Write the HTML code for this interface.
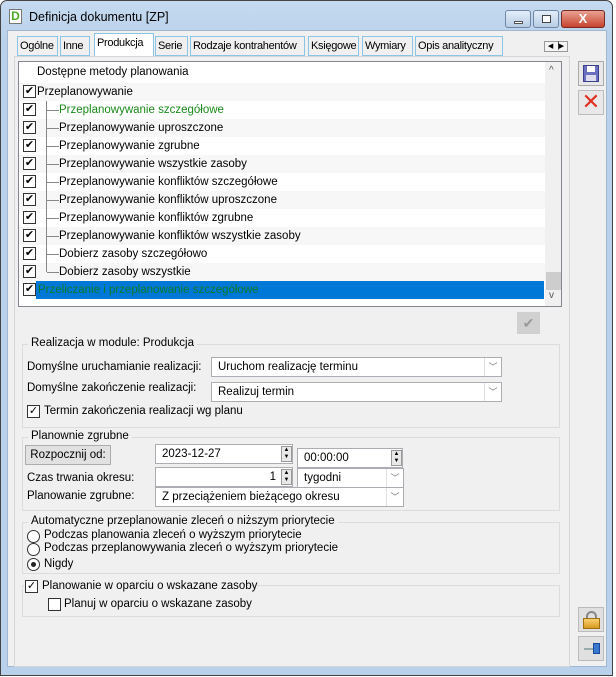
<!DOCTYPE html>
<html><head><meta charset="utf-8"><style>
*{box-sizing:border-box;margin:0;padding:0}
body{width:616px;height:677px;background:#fff;font-family:"Liberation Sans",sans-serif;font-size:11.5px;color:#000;position:relative;overflow:hidden}
.a{position:absolute}
.win{left:0;top:0;width:613px;height:676px;background:linear-gradient(#c5daf0,#b9d1ea 40px,#b9d1ea);border:1px solid #444;border-radius:7px 7px 0 0}
.client{left:7px;top:30px;width:600px;height:637px;background:#f0f0f0;border:1px solid #9fb7d0}
.tab{top:36px;height:20px;border:1px solid #8cc4e6;background:#f0f0f0;padding:3px 2px;white-space:nowrap;font-size:11px;letter-spacing:-0.3px;overflow:hidden}
.panel{left:14px;top:56px;width:556px;height:611px;border:1px solid #d6d6d6;background:#f0f0f0}
.list{left:18px;top:61px;width:544px;height:246px;border:1px solid #828790;background:#fff;overflow:hidden}
.row{position:absolute;left:0;width:526px;height:18px;line-height:18px}
.cb{position:absolute;width:13px;height:13px;border:1px solid #333;background:#fff;font-size:11px;line-height:11px;text-align:center}
.grp{border:1px solid #dcdcdc}
.lg{background:#f0f0f0;padding:0 3px;position:absolute;top:-8px;left:5px}
.combo{border:1px solid #abadb3;background:#fff;height:20px;line-height:18px;padding-left:6px}
.dd{position:absolute;right:0;top:0;width:17px;height:18px;border-left:1px solid #e0e0e0;color:#777;font-size:9px;text-align:center;line-height:18px}
.rb{position:absolute;width:13px;height:13px;border:1px solid #333;border-radius:50%;background:#fff}
.sp{position:absolute;width:11px;border:1px solid #999;background:#e8e8e8;font-size:6px;line-height:7px;text-align:center}
.sbtn{left:578px;width:26px;height:25px;border:1px solid #bbb;background:#ddd}
</style></head><body>
<div class="a win"></div>
<div class="a" style="left:9px;top:9px;width:13px;height:15px;background:#fff;border:1px solid #777;color:#4caa2a;font-weight:bold;font-size:12px;line-height:13px;text-align:center">D</div>
<div class="a" style="left:29px;top:10px;font-size:12.5px">Definicja dokumentu [ZP]</div>
<div class="a" style="left:505px;top:10px;width:26px;height:18px;border:1px solid #6d86a5;border-radius:3px;background:linear-gradient(#e3eefa,#b7cce4)"><div class="a" style="left:8px;top:10px;width:9px;height:3px;background:#fff;border:1px solid #555"></div></div>
<div class="a" style="left:533px;top:10px;width:26px;height:18px;border:1px solid #6d86a5;border-radius:3px;background:linear-gradient(#e3eefa,#b7cce4)"><div class="a" style="left:8px;top:4px;width:9px;height:8px;border:1px solid #444;background:#fff"></div></div>
<div class="a" style="left:561px;top:10px;width:44px;height:18px;border:1px solid #7a2a20;border-radius:3px;background:linear-gradient(#e9a293,#c7432e);color:#fff;font-weight:bold;text-align:center;line-height:16px;font-size:13px">X</div>
<div class="a client"></div>
<div class="a tab" style="left:17px;width:41px">Ogólne</div>
<div class="a tab" style="left:60px;width:30px">Inne</div>
<div class="a tab" style="left:94px;top:33px;height:24px;width:60px;background:#fff;border-bottom:none">Produkcja</div>
<div class="a tab" style="left:155px;width:33px">Serie</div>
<div class="a tab" style="left:190px;width:115px">Rodzaje kontrahentów</div>
<div class="a tab" style="left:308px;width:51px">Księgowe</div>
<div class="a tab" style="left:362px;width:51px">Wymiary</div>
<div class="a tab" style="left:415px;width:88px">Opis analityczny</div>
<div class="a" style="left:544px;top:41px;width:24px;height:11px;border:1px solid #999;background:#f4f4f4;font-size:7px;line-height:9px;text-align:center">◀▕▶</div>
<div class="a panel"></div>
<div class="a list">
 <div class="a" style="left:18px;top:4px">Dostępne metody planowania</div>
 <div class="row" style="top:21px;background:#f7f7f7"><div class="cb" style="left:4px;top:2px">✔</div><span style="position:absolute;left:18px">Przeplanowywanie</span></div>
 <div id="rows"></div>
 <div class="a" style="left:27px;top:39px;width:1px;height:171px;background:#888"></div>
 <div class="row" style="top:219px;left:17px;width:508px;background:#0078d7;color:#0a7a2a;padding-left:2px">Przeliczanie i przeplanowanie szczegółowe</div>
 <div class="cb" style="left:4px;top:221px">✔</div>
 <div class="a" style="left:526px;top:0;width:17px;height:244px;background:#f0f0f0"></div>
 <div class="a" style="left:530px;top:3px;font-size:10px;color:#555">^</div>
 <div class="a" style="left:527px;top:210px;width:15px;height:18px;background:#cdcdcd"></div>
 <div class="a" style="left:530px;top:228px;font-size:10px;color:#555">v</div>
</div>
<script>
var t=["Przeplanowywanie szczegółowe","Przeplanowywanie uproszczone","Przeplanowywanie zgrubne","Przeplanowywanie wszystkie zasoby","Przeplanowywanie konfliktów szczegółowe","Przeplanowywanie konfliktów uproszczone","Przeplanowywanie konfliktów zgrubne","Przeplanowywanie konfliktów wszystkie zasoby","Dobierz zasoby szczegółowo","Dobierz zasoby wszystkie"],h="";
for(var i=0;i<t.length;i++){var y=39+i*18;h+='<div class="row" style="top:'+y+'px;'+(i%2?'background:#f7f7f7':'')+'"><div class="cb" style="left:4px;top:2px">✔</div><div class="a" style="left:28px;top:9px;width:12px;height:1px;background:#888"></div><span style="position:absolute;left:40px;'+(i==0?'color:#1a8a1a':'')+'">'+t[i]+'</span></div>';}
document.getElementById('rows').innerHTML=h;
</script>
<div class="a" style="left:517px;top:312px;width:23px;height:22px;background:#d0d0d0;color:#999;text-align:center;line-height:22px;font-size:14px">✔</div>
<div class="a grp" style="left:22px;top:344px;width:538px;height:84px"><span class="lg">Realizacja w module: Produkcja</span></div>
<div class="a" style="left:27px;top:361px">Domyślne uruchamianie realizacji:</div>
<div class="a combo" style="left:211px;top:357px;width:291px">Uruchom realizację terminu<div class="dd">﹀</div></div>
<div class="a" style="left:27px;top:382px">Domyślne zakończenie realizacji:</div>
<div class="a combo" style="left:211px;top:382px;width:291px">Realizuj termin<div class="dd">﹀</div></div>
<div class="cb" style="left:27px;top:405px;font-size:11px">✓</div>
<div class="a" style="left:44px;top:405px">Termin zakończenia realizacji wg planu</div>
<div class="a grp" style="left:22px;top:437px;width:538px;height:74px"><span class="lg">Planownie zgrubne</span></div>
<div class="a" style="left:25px;top:445px;width:86px;height:20px;background:#e1e1e1;border:1px solid #adadad;text-align:center;line-height:18px">Rozpocznij od:</div>
<div class="a combo" style="left:155px;top:444px;width:138px;background:#fff">2023-12-27</div>
<div class="sp" style="left:281px;top:446px;height:16px">▲<br>▼</div>
<div class="a combo" style="left:297px;top:448px;width:106px">00:00:00</div>
<div class="sp" style="left:391px;top:450px;height:16px">▲<br>▼</div>
<div class="a" style="left:27px;top:472px">Czas trwania okresu:</div>
<div class="a combo" style="left:155px;top:467px;width:138px;text-align:right;padding-right:16px">1</div>
<div class="sp" style="left:281px;top:469px;height:16px">▲<br>▼</div>
<div class="a combo" style="left:297px;top:468px;width:107px">tygodni<div class="dd">﹀</div></div>
<div class="a" style="left:27px;top:490px">Planowanie zgrubne:</div>
<div class="a combo" style="left:155px;top:487px;width:249px">Z przeciążeniem bieżącego okresu<div class="dd">﹀</div></div>
<div class="a grp" style="left:22px;top:522px;width:538px;height:52px"><span class="lg">Automatyczne przeplanowanie zleceń o niższym priorytecie</span></div>
<div class="rb" style="left:27px;top:530px"></div><div class="a" style="left:44px;top:529px">Podczas planowania zleceń o wyższym priorytecie</div>
<div class="rb" style="left:27px;top:543px"></div><div class="a" style="left:44px;top:542px">Podczas przeplanowywania zleceń o wyższym priorytecie</div>
<div class="rb" style="left:27px;top:558px"><div class="a" style="left:3px;top:3px;width:5px;height:5px;border-radius:50%;background:#222"></div></div><div class="a" style="left:44px;top:558px">Nigdy</div>
<div class="a grp" style="left:22px;top:585px;width:538px;height:32px"></div>
<div class="a" style="left:24px;top:579px;width:222px;height:14px;background:#f0f0f0"></div>
<div class="cb" style="left:25px;top:580px;font-size:11px">✓</div>
<div class="a" style="left:42px;top:580px">Planowanie w oparciu o wskazane zasoby</div>
<div class="cb" style="left:48px;top:598px"></div>
<div class="a" style="left:64px;top:598px">Planuj w oparciu o wskazane zasoby</div>
<div class="a sbtn" style="top:61px;border-color:#aaa;background:#e8e8e8"><div class="a" style="left:4px;top:3px;width:16px;height:17px;background:#6a6fc0;border:1px solid #3c3f8a"><div class="a" style="left:3px;top:0;width:8px;height:6px;background:#fff"></div><div class="a" style="left:2px;top:9px;width:10px;height:6px;background:#dde"></div></div></div>
<div class="a sbtn" style="top:90px;background:#e8e8e8;color:#e23020;font-size:22px;text-align:center;line-height:22px">✕</div>
<div class="a sbtn" style="top:607px;background:#e0e0e0"><div class="a" style="left:7px;top:3px;width:11px;height:10px;border:2px solid #888;border-bottom:none;border-radius:6px 6px 0 0"></div><div class="a" style="left:4px;top:10px;width:17px;height:11px;background:linear-gradient(#f8d070,#d89a20);border:1px solid #a07010"></div></div>
<div class="a sbtn" style="top:636px;background:#e0e0e0"><div class="a" style="left:5px;top:11px;width:10px;height:2px;background:#9aa"></div><div class="a" style="left:14px;top:6px;width:7px;height:11px;background:#3a78d0;border:1px solid #1a4a9a"></div></div>
</body></html>
